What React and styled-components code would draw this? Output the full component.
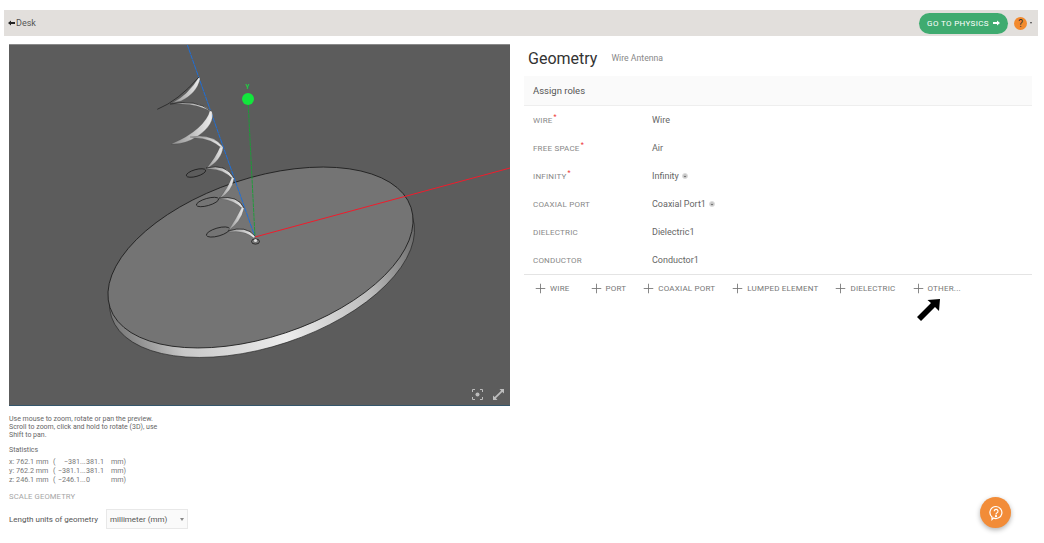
import React from 'react';
import styled, { createGlobalStyle } from 'styled-components';
import { Plus } from 'lucide-react';

const GlobalStyle = createGlobalStyle`
  html, body {
    margin: 0;
    background: #fff;
    font-family: Roboto, "Liberation Sans", sans-serif;
    color: #444;
    overflow: hidden;
  }
  * { box-sizing: border-box; }
`;

const Page = styled.div`
  position: relative;
  width: 1044px;
  height: 543px;
  padding: 10px 6px 0 4px;
`;

const TopBar = styled.header`
  height: 26px;
  background: #e2dfdc;
  display: flex;
  align-items: center;
  padding: 0 6px 0 4px;
`;

const DeskLink = styled.a`
  display: flex;
  align-items: center;
  gap: 1px;
  font-size: 9px;
  color: #555;
`;

const PhysicsButton = styled.button`
  margin-left: auto;
  width: 89px;
  height: 21px;
  border: 0;
  border-radius: 11px;
  background: #3fab70;
  color: #fff;
  font: 400 8px Roboto, sans-serif;
  letter-spacing: 0.35px;
  display: flex;
  align-items: center;
  justify-content: center;
  gap: 4px;
  padding: 0;
`;

const HelpDot = styled.span`
  width: 13px;
  height: 13px;
  margin-left: 6px;
  border-radius: 50%;
  background: #f28a2e;
  color: #333;
  font-size: 10px;
  display: flex;
  align-items: center;
  justify-content: center;
`;

const Caret = styled.span`
  width: 0;
  height: 0;
  margin-left: ${p => p.$gap || 2}px;
  border-left: ${p => p.$size || 1.5}px solid transparent;
  border-right: ${p => p.$size || 1.5}px solid transparent;
  border-top: ${p => (p.$size || 1.5) + 0.5}px solid ${p => p.$color || '#444'};
`;

const Columns = styled.main`
  display: grid;
  grid-template-columns: 501px 508px;
  column-gap: 14px;
  padding: 8px 0 0 5px;
`;

const LeftColumn = styled.section`
  display: flex;
  flex-direction: column;
`;

const Viewer = styled.div`
  position: relative;
  height: 362px;
  background: #5c5c5c;
  border-top: 1px solid #8a8a8a;
  border-bottom: 1px solid #34566b;
  overflow: hidden;

  > svg:first-child {
    display: block;
    width: 501px;
    height: 360px;
  }
`;

const ViewerTools = styled.div`
  position: absolute;
  right: 6px;
  bottom: 5px;
  display: flex;
  gap: 10px;
  color: #bdbdbd;
`;

const Hint = styled.p`
  margin: 9px 0 0;
  font-size: 7px;
  line-height: 8px;
  width: 155px;
  color: #666;
`;

const StatsTitle = styled.div`
  margin-top: 7px;
  font-size: 7px;
  line-height: 9px;
  color: #666;
`;

const StatsGrid = styled.div`
  margin-top: 2px;
  display: grid;
  grid-template-columns: 44px 3px 24px 6px 25px auto;
  justify-content: start;
  font-size: 7.2px;
  line-height: 9px;
  color: #777;
`;

const Num = styled.span`
  text-align: ${p => p.$align || 'left'};
  white-space: nowrap;
`;

const SectionLabel = styled.div`
  margin-top: 8px;
  font-size: 7.7px;
  line-height: 10px;
  color: #a5a5a5;
  letter-spacing: 0.1px;
`;

const UnitsRow = styled.div`
  margin-top: 7px;
  display: flex;
  align-items: center;
  gap: 8px;
  font-size: 8px;
  color: #555;
`;

const SelectBox = styled.div`
  width: 82px;
  height: 20px;
  background: #fafafa;
  border: 1px solid #e8e8e8;
  padding: 0 3px;
  display: flex;
  align-items: center;
  justify-content: space-between;
  font-size: 8px;
`;

const RightColumn = styled.section`
  display: flex;
  flex-direction: column;
`;

const TitleRow = styled.div`
  height: 32px;
  padding: 0 0 4px 4px;
  display: flex;
  align-items: center;
  gap: 14px;
`;

const Title = styled.h1`
  margin: 0;
  font-size: 16px;
  font-weight: 400;
  color: #333;
`;

const Subtitle = styled.span`
  font-size: 8.7px;
  color: #888;
`;

const PanelHead = styled.div`
  height: 30px;
  padding-left: 9px;
  background: #fafafa;
  border-bottom: 1px solid #eee;
  display: flex;
  align-items: center;
  font-size: 9.5px;
  color: #555;
`;

const RoleList = styled.div`
  border-bottom: 1px solid #e4e4e4;
`;

const Row = styled.div`
  height: 28px;
  padding-left: 9px;
  display: grid;
  grid-template-columns: 119px 1fr;
  align-items: center;
`;

const RoleLabel = styled.span`
  font-size: 8px;
  letter-spacing: 0.2px;
  color: #888;

  sup {
    color: #e33;
    font-size: 7px;
    line-height: 0;
    margin-left: 1px;
  }
`;

const RoleValue = styled.span`
  display: flex;
  align-items: center;
  gap: 3px;
  font-size: 9px;
  color: #666;
`;

const InfoDot = styled.span`
  width: 6px;
  height: 6px;
  border-radius: 50%;
  background: #c4c4c4;
  border: 1px solid #ddd;
  position: relative;

  &::after {
    content: '';
    position: absolute;
    left: 1px;
    top: 1.5px;
    width: 2px;
    height: 1px;
    background: #777;
  }
`;

const AddBar = styled.div`
  display: flex;
  padding: 6px 0 0 9px;
  gap: 15px;
`;

const AddButton = styled.button`
  border: 0;
  background: none;
  padding: 0;
  height: 15px;
  display: flex;
  align-items: center;
  gap: 2px;
  font: 400 8px Roboto, sans-serif;
  letter-spacing: 0.2px;
  color: #777;

  svg { color: #777; }

  &:first-child { padding-right: 4px; }
`;

const Pointer = styled.svg`
  position: absolute;
  left: 915px;
  top: 298px;
`;

const HelpFab = styled.button`
  position: absolute;
  left: 980px;
  top: 497px;
  width: 31px;
  height: 31px;
  border: 0;
  padding: 0;
  border-radius: 50%;
  background: #f28c38;
  box-shadow: 0 2px 5px rgba(0, 0, 0, 0.3);
  display: flex;
  align-items: center;
  justify-content: center;
`;

const roles = [
  { label: 'Wire', value: 'Wire', required: true },
  { label: 'Free space', value: 'Air', required: true },
  { label: 'Infinity', value: 'Infinity', required: true, info: true },
  { label: 'Coaxial port', value: 'Coaxial Port1', info: true },
  { label: 'Dielectric', value: 'Dielectric1' },
  { label: 'Conductor', value: 'Conductor1' },
];

const addItems = ['WIRE', 'PORT', 'COAXIAL PORT', 'LUMPED ELEMENT', 'DIELECTRIC', 'OTHER...'];

const stats = [
  ['x: 762.1 mm', '(', '−381', '...', '381.1', 'mm)'],
  ['y: 762.2 mm', '(', '−381.1', '...', '381.1', 'mm)'],
  ['z: 246.1 mm', '(', '−246.1', '...', '0', 'mm)'],
];

// white ribbons of the helix, in page coordinates
const ribbons = [
  'M172,103 Q188,95 199,77 L200,79 Q197,93 181,101Z',
  'M170,104 Q196,99 210,110 L212,112 Q196,103 178,104Z',
  'M212,112 Q215,124 198,136 Q184,145 171,144 Q188,137 198,128 Q208,119 210,110Z',
  'M190,137 Q212,133 223,147 L223,149 Q210,138 196,138Z',
  'M223,147 Q222,160 206,169 Q216,157 220,147Z',
  'M206,168 Q226,163 234,178 L233,179 Q222,168 208,169Z',
  'M234,178 Q232,192 219,199 Q228,188 232,177Z',
  'M219,198 Q238,195 244,208 L243,209 Q234,200 221,199Z',
  'M244,208 Q241,222 228,231 Q236,219 242,207Z',
  'M228,231 Q246,225 255,236 L254,238 Q244,230 230,232Z',
];

// dark edge lines running along the ribbons
const edges = [
  'M157.3,109.3 Q178,101 199,77',
  'M170,104 Q196,99 211,111',
  'M206,168 Q226,163 234,178',
  'M219,198 Q238,195 244,208',
  'M228,231 Q246,225 255,236',
];

const Scene = () => (
  <svg viewBox="9 45 501 360">
    <defs>
      <linearGradient id="rim" x1="0" x2="1" y1="0" y2="0">
        <stop offset="0" stopColor="#777" />
        <stop offset="0.18" stopColor="#c8c8c8" />
        <stop offset="0.5" stopColor="#ececec" />
        <stop offset="0.8" stopColor="#bbb" />
        <stop offset="1" stopColor="#666" />
      </linearGradient>
      <linearGradient id="wire" x1="0" x2="1" y1="0" y2="0">
        <stop offset="0" stopColor="#8f8f8f" />
        <stop offset="1" stopColor="#eeeeee" />
      </linearGradient>
    </defs>

    <ellipse cx="262" cy="267" rx="158.6" ry="79.4" transform="rotate(-18.4 262 267)" fill="url(#rim)" stroke="#222" strokeWidth="0.6" />
    <ellipse cx="260.5" cy="257.5" rx="158.6" ry="79.4" transform="rotate(-18.4 260.5 257.5)" fill="#747474" stroke="#1c1c1c" strokeWidth="0.8" />

    <line x1="187" y1="44" x2="255" y2="237" stroke="#1e6fd8" strokeWidth="1" strokeDasharray="5 0.6" />
    <line x1="248" y1="100" x2="255" y2="237" stroke="#16a034" strokeWidth="0.9" strokeDasharray="4 0.7" />
    <line x1="255" y1="237" x2="510" y2="168" stroke="#f01c2c" strokeWidth="1" />
    <circle cx="248" cy="99" r="6" fill="#12e63c" />
    <text x="247.5" y="89" fontSize="6.5" fontWeight="700" fontFamily="Roboto, sans-serif" textAnchor="middle" fill="#18d040">Y</text>

    <g fill="none" stroke="#111" strokeWidth="0.7">
      <ellipse cx="196" cy="173" rx="10" ry="3.4" transform="rotate(-16 196 173)" />
      <ellipse cx="207.5" cy="202" rx="11.5" ry="3.6" transform="rotate(-16 207.5 202)" />
      <ellipse cx="218" cy="232" rx="12" ry="4" transform="rotate(-16 218 232)" />
      <ellipse cx="255.5" cy="241.5" rx="4" ry="2.6" />
    </g>
    <g fill="url(#wire)" stroke="#333" strokeWidth="0.2">
      {ribbons.map(d => <path key={d} d={d} />)}
    </g>
    <g fill="none" stroke="#111" strokeWidth="0.6">
      {edges.map(d => <path key={d} d={d} />)}
    </g>
    <circle cx="255.5" cy="240.5" r="1.6" fill="#ddd" />
  </svg>
);

const App = () => (
  <Page>
    <GlobalStyle />
    <TopBar>
      <DeskLink>
        <svg width="7" height="6" viewBox="0 0 7 6">
          <path d="M0 3 L3 0.5 V2 H7 V4 H3 V5.5Z" fill="#222" />
        </svg>
        Desk
      </DeskLink>
      <PhysicsButton>
        GO TO PHYSICS
        <svg width="7" height="6" viewBox="0 0 7 6">
          <path d="M7 3 L4 0.5 V2 H0 V4 H4 V5.5Z" fill="#fff" />
        </svg>
      </PhysicsButton>
      <HelpDot>?</HelpDot>
      <Caret $gap={3} />
    </TopBar>

    <Columns>
      <LeftColumn>
        <Viewer>
          <Scene />
          <ViewerTools>
            <svg width="11" height="11" viewBox="0 0 11 11" fill="none" stroke="currentColor" strokeWidth="1">
              <path d="M.5 3 V.5 H3 M8 .5 H10.5 V3 M10.5 8 V10.5 H8 M3 10.5 H.5 V8" />
              <circle cx="5.5" cy="5.5" r="2" fill="currentColor" stroke="none" />
            </svg>
            <svg width="11" height="11" viewBox="0 0 11 11" fill="currentColor">
              <path d="M6.5 0 H11 V4.5 L9.3 2.9 L2.9 9.3 L4.5 11 H0 V6.5 L1.7 8.1 L8.1 1.7Z" />
            </svg>
          </ViewerTools>
        </Viewer>
        <Hint>Use mouse to zoom, rotate or pan the preview. Scroll to zoom, click and hold to rotate (3D), use Shift to pan.</Hint>
        <StatsTitle>Statistics</StatsTitle>
        <StatsGrid>
          {stats.map(row => row.map((cell, i) => (
            <Num key={row[0] + i} $align={i === 2 ? 'right' : 'left'}>{cell}</Num>
          )))}
        </StatsGrid>
        <SectionLabel>SCALE GEOMETRY</SectionLabel>
        <UnitsRow>
          Length units of geometry
          <SelectBox>
            millimeter (mm)
            <Caret $color="#888" $size={2.5} />
          </SelectBox>
        </UnitsRow>
      </LeftColumn>

      <RightColumn>
        <TitleRow>
          <Title>Geometry</Title>
          <Subtitle>Wire Antenna</Subtitle>
        </TitleRow>
        <PanelHead>Assign roles</PanelHead>
        <RoleList>
          {roles.map(role => (
            <Row key={role.label}>
              <RoleLabel>
                {role.label.toUpperCase()}
                {role.required && <sup>*</sup>}
              </RoleLabel>
              <RoleValue>
                {role.value}
                {role.info && <InfoDot />}
              </RoleValue>
            </Row>
          ))}
        </RoleList>
        <AddBar>
          {addItems.map(item => (
            <AddButton key={item}>
              <Plus size={15} strokeWidth={1.4} />
              {item}
            </AddButton>
          ))}
        </AddBar>
      </RightColumn>
    </Columns>

    <Pointer width="27" height="27" viewBox="0 0 27 27">
      <path d="M25 1 L24 13 L20 9 L6 23 L2 19 L16 5 L12.5 2Z" fill="#000" />
    </Pointer>

    <HelpFab aria-label="help">
      <svg width="16" height="16" viewBox="0 0 16 16" fill="none" stroke="#fff" strokeWidth="1.2">
        <path d="M8 1.5 A6 6 0 1 1 5.5 13 L4 14.5 L4 12 A6 6 0 0 1 8 1.5Z" />
        <path d="M6.2 6.3 A1.9 1.9 0 1 1 8.8 8 Q8 8.4 8 9.4" />
        <circle cx="8" cy="11.2" r="0.5" fill="#fff" />
      </svg>
    </HelpFab>
  </Page>
);

export default App;
